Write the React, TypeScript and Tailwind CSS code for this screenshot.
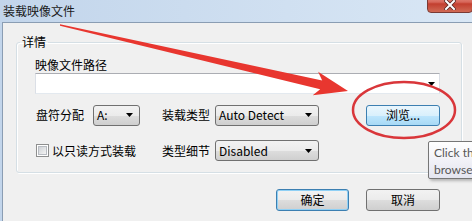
import React from "react";

const Arrow = ({ w = 7 }: { w?: number }) => (
  <svg width={w} height={4} viewBox="0 0 7 4" className="shrink-0">
    <polygon points="0,0 7,0 3.5,4" fill="#000" />
  </svg>
);

const Select = ({ value, w }: { value: string; w: string }) => (
  <div
    className={`${w} h-[21px] flex items-center justify-between rounded-[3px] border border-[#707070] bg-[linear-gradient(to_bottom,#f2f2f2_0%,#ebebeb_50%,#dddddd_51%,#cfcfcf_100%)] pl-[3px] pr-[6px] text-[12px] text-black`}
  >
    <span className="leading-none">{value}</span>
    <Arrow />
  </div>
);

export default function App() {
  return (
    <div className="relative w-[472px] h-[221px] overflow-hidden bg-[linear-gradient(to_right,#c2d5eb,#d9e7f5)] font-['Lato','Noto_Sans_CJK_SC',sans-serif] text-[12px] text-black">
      {/* title bar */}
      <div className="flex h-[22px]">
        <div className="pl-[3px] pt-[3px] text-[12px] leading-[16px] text-[#1a1a1a] font-['Noto_Sans_CJK_SC',sans-serif]">
          装载映像文件
        </div>
        <div className="ml-auto mr-[-1px] mt-[-7px] h-[20px] w-[46px] flex items-center justify-center rounded-b-[4px] border border-[#7a3a34] bg-[linear-gradient(to_bottom,#e8a295_0%,#d7675a_45%,#c23f2f_55%,#d06a55_100%)]">
          <svg width="12" height="10" viewBox="0 0 12 10" className="mt-[4px]">
            <path d="M2 1 L10 9 M10 1 L2 9" stroke="#5a2a25" strokeWidth="3.6" strokeLinecap="square" />
            <path d="M2 1 L10 9 M10 1 L2 9" stroke="#ffffff" strokeWidth="2" strokeLinecap="square" />
          </svg>
        </div>
      </div>

      {/* client area */}
      <div className="ml-[2px] h-[199px] border-l border-t border-[#8a9db3] bg-[#f0f0f0]">
        <fieldset className="ml-[13px] mt-[12px] w-[446px] rounded-[3px] border border-[#d5dfe5] px-[3px] pb-[11px] shadow-[inset_1px_1px_0_#ffffff,1px_1px_0_#ffffff]">
          <legend className="px-[2px] leading-[14px] font-['Noto_Sans_CJK_SC',sans-serif]">详情</legend>
          <div className="pl-[15px] font-['Noto_Sans_CJK_SC',sans-serif]">
            <div className="mt-[9px] leading-[14px]">映像文件路径</div>
            <div className="mt-[1px] flex h-[21px] w-[405px] items-center justify-end border border-[#abadb3] border-l-[#dbdfe6] border-r-[#dbdfe6] border-b-[#e3e9ef] bg-white pr-[4px]">
              <Arrow />
            </div>

            <div className="mt-[10px] flex h-[22px] items-center">
              <div className="w-[58px] pl-[1px] leading-[14px]">盘符分配</div>
              <Select value="A:" w="w-[47px]" />
              <div className="ml-[22px] w-[53px] leading-[14px]">装载类型</div>
              <Select value="Auto Detect" w="w-[104px]" />
              <div className="ml-[47px] flex h-[21px] w-[74px] items-center justify-center rounded-[3px] border border-[#3c7fb1] bg-[linear-gradient(to_bottom,#eaf6fd_0%,#d9f0fc_50%,#bee6fd_51%,#a7d9f5_100%)] leading-none">
                浏览...
              </div>
            </div>

            <div className="mt-[14px] flex h-[21px] items-center">
              <div className="flex w-[127px] items-center">
                <div className="ml-[1px] flex h-[13px] w-[13px] items-center justify-center border border-[#8e8f8f] bg-white">
                  <div className="h-[9px] w-[9px] border border-[#b8bcc2] bg-[linear-gradient(135deg,#cfd2d6,#f4f4f4)]" />
                </div>
                <span className="ml-[3px] leading-[14px]">以只读方式装载</span>
              </div>
              <div className="w-[53px] leading-[14px]">类型细节</div>
              <Select value="Disabled" w="w-[104px]" />
            </div>
          </div>
        </fieldset>

        <div className="ml-[13px] mt-[16px] flex w-[446px] justify-end gap-[17px] pr-[22px] font-['Noto_Sans_CJK_SC',sans-serif]">
          <div className="flex h-[22px] w-[73px] items-center justify-center rounded-[3px] border border-[#3c7fb1] bg-[linear-gradient(to_bottom,#f2f2f2_0%,#ebebeb_50%,#dddddd_51%,#cfcfcf_100%)] shadow-[inset_0_0_0_1px_#8fd0f5] leading-none">
            确定
          </div>
          <div className="flex h-[22px] w-[74px] items-center justify-center rounded-[3px] border border-[#707070] bg-[linear-gradient(to_bottom,#f2f2f2_0%,#ebebeb_50%,#dddddd_51%,#cfcfcf_100%)] leading-none">
            取消
          </div>
        </div>
      </div>

      {/* tooltip */}
      <div className="absolute left-[428px] top-[141px] h-[38px] w-[80px] rounded-[2px] border border-[#767676] bg-[linear-gradient(to_bottom,#ffffff,#e4e5f0)] px-[5px] pt-[2px] text-[12px] leading-[17px] text-[#575757] shadow-[2px_2px_3px_rgba(0,0,0,0.25)] whitespace-nowrap">
        <div>Click the</div>
        <div>browse</div>
      </div>

      {/* annotations */}
      <svg className="pointer-events-none absolute left-0 top-0" width="472" height="221" viewBox="0 0 472 221">
        <polygon
          points="60,24.3 322.2,80.5 318.1,71.8 348,91 312.7,95.2 320.2,89.3 60,25.7"
          fill="#e8362f"
        />
        <ellipse cx="404" cy="110" rx="51" ry="28" fill="none" stroke="#d9363a" strokeWidth="2.5" />
      </svg>
    </div>
  );
}
